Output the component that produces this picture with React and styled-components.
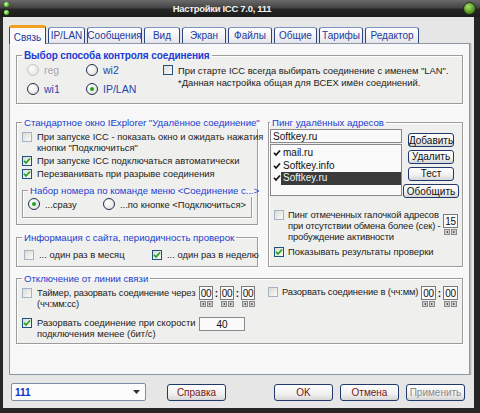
import styled, { createGlobalStyle } from 'styled-components';

const GlobalStyle = createGlobalStyle`
  html, body { margin: 0; padding: 0; background: #262626; }
  body {
    font-family: "Liberation Sans", Arial, sans-serif;
    font-size: 9.4px;
    color: #222;
  }
  * { box-sizing: border-box; }
`;

const Window = styled.div`
  width: 480px;
  height: 413px;
  display: flex;
  flex-direction: column;
  background: #262626;
  overflow: hidden;
`;

const TitleBar = styled.div`
  height: 17px;
  flex: none;
  display: flex;
  align-items: center;
  padding: 0 4px;
  background: linear-gradient(#6a6a6a, #444 45%, #262626 55%, #1c1c1c);
`;

const Leds = styled.div`
  display: flex;
  flex-direction: column;
  gap: 3px;
`;

const Led = styled.span`
  width: 5px;
  height: 5px;
  border-radius: 50%;
  background: radial-gradient(circle at 35% 35%, #d8ffb0, #5cc22c 60%, #2c6a14);
`;

const Title = styled.div`
  flex: 1;
  text-align: center;
  padding-right: 28px;
  color: #f2f2f2;
  font-weight: bold;
  font-size: 9.5px;
  letter-spacing: -0.3px;
`;

const Orb = styled.span`
  width: 13px;
  height: 13px;
  border-radius: 50%;
  border: 1px solid #1e3010;
  background: radial-gradient(circle at 40% 35%, #a8e070, #5a9a24 55%, #33600f);
`;

const Frame = styled.div`
  flex: 1;
  margin: 0 6px 5px 3px;
  padding: 8px 4px 0 6px;
  display: flex;
  flex-direction: column;
  background: #e6e6e6;
`;

const TabRow = styled.div`
  height: 18px;
  display: flex;
  align-items: flex-end;
  gap: 2px;
`;

const Tab = styled.div`
  width: ${p => p.$w}px;
  height: ${p => (p.$active ? 19 : 16)}px;
  margin-bottom: ${p => (p.$active ? -1 : 0)}px;
  position: relative;
  z-index: ${p => (p.$active ? 2 : 0)};
  display: flex;
  align-items: center;
  justify-content: center;
  padding-top: ${p => (p.$active ? 2 : 0)}px;
  border: 1px solid #2a4684;
  border-top: ${p => (p.$active ? '3px solid #f0a020' : '1px solid #7c94c0')};
  border-bottom: none;
  border-radius: 3px 3px 0 0;
  background: ${p => (p.$active ? '#fafafa' : 'linear-gradient(#ffffff, #f0f0f2 70%, #e2e4ea)')};
  color: #1d3a9e;
  font-size: 10px;
  white-space: nowrap;
`;

const Panel = styled.div`
  height: 332px;
  flex: none;
  padding: 5px 6px 0 6px;
  border: 1px solid #8c96a8;
  box-shadow: 1px 0 0 #b8b8b8, 2px 0 0 #d4d4d4;
  background: repeating-conic-gradient(#f3f3f3 0 25%, #fcfcfc 0 50%) 0 0 / 2px 2px;
`;

const Group = styled.fieldset`
  margin: 0;
  min-width: 0;
  padding: 0 ${p => p.$pr ?? 5}px ${p => p.$pb ?? 6}px ${p => p.$pl ?? 5}px;
  border: 1px solid #9c9c9c;
  box-shadow: inset 1px 1px 0 #fff, 1px 1px 0 #fff;
  background: #efefed;
  display: flex;
  flex-direction: column;
`;

const Legend = styled.legend`
  padding: 0 2px;
  line-height: 13px;
  color: #1a3cd0;
  font-size: ${p => (p.$bold ? 10 : 9.6)}px;
  font-weight: ${p => (p.$bold ? 'bold' : 'normal')};
  letter-spacing: ${p => (p.$bold ? '-0.1px' : '0')};
  white-space: nowrap;
`;

const BoxMark = styled.span`
  flex: none;
  width: 10px;
  height: 10px;
  margin-top: ${p => p.$mt ?? 1}px;
  border: 1px solid ${p => (p.$faint ? '#a2b2c8' : '#1c5180')};
  background: linear-gradient(135deg, #dcdcd4, #fafaf8);
  display: flex;
  align-items: center;
  justify-content: center;
`;

const CheckLabel = styled.span`
  line-height: 11px;
  white-space: nowrap;
  letter-spacing: ${p => (p.$tight ? '-0.15px' : '0')};
`;

const CheckRow = styled.div`
  display: flex;
  align-items: flex-start;
  gap: ${p => p.$gap ?? 5}px;
  width: ${p => (p.$w ? `${p.$w}px` : 'auto')};
  flex: ${p => (p.$grow ? 1 : 'none')};
`;

const Tick = ({ color = '#21a121' }) => (
  <svg width="8" height="8" viewBox="0 0 8 8">
    <path d="M1 3.8 L3 6 L7 1.5" stroke={color} strokeWidth="1.7" fill="none" />
  </svg>
);

const Checkbox = ({ checked, faint, children, mt, gap, w, grow, tight }) => (
  <CheckRow $gap={gap} $w={w} $grow={grow}>
    <BoxMark $faint={faint} $mt={mt}>{checked && <Tick />}</BoxMark>
    <CheckLabel $tight={tight}>{children}</CheckLabel>
  </CheckRow>
);

const RadioDot = styled.span`
  flex: none;
  width: 12px;
  height: 12px;
  border-radius: 50%;
  border: 1px solid ${p => (p.$disabled ? '#c6c6c2' : '#1e2f4a')};
  background: radial-gradient(circle at 35% 35%, #fff, #dddcd6);
  display: flex;
  align-items: center;
  justify-content: center;
  &::after {
    content: '';
    display: ${p => (p.$on ? 'block' : 'none')};
    width: 4px;
    height: 4px;
    border-radius: 50%;
    background: #22a022;
  }
`;

const RadioRow = styled.div`
  display: flex;
  align-items: center;
  gap: 5px;
  height: 16px;
  white-space: nowrap;
  color: ${p => (p.$disabled ? '#a8a8a8' : p.$blue ? '#2446b0' : '#222')};
  font-size: ${p => (p.$blue ? 10.5 : 9.4)}px;
`;

const Radio = ({ on, disabled, blue, children }) => (
  <RadioRow $disabled={disabled} $blue={blue}>
    <RadioDot $on={on} $disabled={disabled} />
    {children}
  </RadioRow>
);

const ModeBody = styled.div`
  display: flex;
  align-items: flex-start;
`;

const RadioGrid = styled.div`
  display: grid;
  grid-template-columns: 59px 59px;
  row-gap: 3px;
  margin-left: 5px;
`;

const NoteBlock = styled.div`
  margin-left: 18px;
  margin-top: 3px;
  & span { line-height: 12px; }
`;

const MidRow = styled.div`
  display: grid;
  grid-template-columns: 242px 195px;
  column-gap: 10px;
  margin-top: 12px;
`;

const LeftCol = styled.div`
  display: flex;
  flex-direction: column;
  gap: 6px;
`;

const Stack = styled.div`
  display: flex;
  flex-direction: column;
  gap: ${p => p.$gap ?? 1}px;
  margin-top: ${p => p.$mt ?? 0}px;
`;

const DialRadios = styled.div`
  display: flex;
  height: 14px;
  align-items: center;
  & > *:first-child { width: 84px; }
`;

const TwoCols = styled.div`
  display: grid;
  grid-template-columns: 128px 1fr;
  margin-top: 5px;
  margin-left: 2px;
`;

const PingTop = styled.div`
  display: flex;
  align-items: flex-start;
`;

const PingList = styled.div`
  width: 133px;
  display: flex;
  flex-direction: column;
  gap: 1px;
`;

const TextField = styled.div`
  height: ${p => p.$h || 14}px;
  width: ${p => (p.$w ? `${p.$w}px` : 'auto')};
  flex: none;
  border: 1px solid #8a8a8a;
  background: #fafafa;
  display: flex;
  align-items: center;
  justify-content: ${p => (p.$center ? 'center' : 'flex-start')};
  padding: 0 2px;
  font-size: 10px;
  color: #111;
`;

const ListBox = styled.div`
  height: 52px;
  border: 1px solid #8a8a8a;
  background: #fafafa;
  padding-top: 2px;
`;

const ListItem = styled.div`
  display: flex;
  align-items: center;
  height: 12.5px;
  padding-left: 2px;
  font-size: 10px;
`;

const ItemText = styled.span`
  flex: 1;
  padding-left: 2px;
  line-height: 12.5px;
  background: ${p => (p.$sel ? '#3b3b3b' : 'transparent')};
  color: ${p => (p.$sel ? '#f0f0f0' : '#111')};
`;

const ButtonCol = styled.div`
  width: 56px;
  margin-left: 1px;
  margin-top: 4px;
  display: flex;
  flex-direction: column;
  align-items: center;
  gap: 2.5px;
`;

const Button = styled.button`
  font: inherit;
  font-size: 10px;
  width: ${p => p.$w}px;
  height: ${p => p.$h || 14}px;
  flex: none;
  padding: 0;
  margin-left: ${p => p.$ml ?? 0}px;
  margin-top: ${p => p.$mt ?? 0}px;
  border: 1px solid #20386c;
  border-radius: 3px;
  background: linear-gradient(#ffffff, #f0f0f0 60%, #d6d6d6);
  color: ${p => p.$color || '#111'};
  display: flex;
  align-items: center;
  justify-content: center;
  white-space: nowrap;
`;

const PingOptions = styled.div`
  display: flex;
  flex-direction: column;
  gap: 4px;
  margin-top: 11px;
  margin-left: 4px;
`;

const PingCheck = styled.div`
  display: flex;
  align-items: flex-start;
`;

const SpinWrap = styled.div`
  display: flex;
  flex-direction: column;
  align-items: center;
  gap: 1px;
  flex: none;
  margin-top: ${p => p.$mt ?? 0}px;
  margin-right: ${p => p.$mr ?? 0}px;
`;

const SpinBox = styled.div`
  width: ${p => p.$w || 14}px;
  height: 14px;
  border: 1px solid #7a7a7a;
  background: #fafafa;
  display: flex;
  align-items: center;
  justify-content: center;
  font-size: 10px;
  letter-spacing: -0.3px;
  color: #111;
`;

const Arrows = styled.div`
  display: flex;
  gap: 1px;
`;

const ArrowBtn = styled.span`
  width: 6px;
  height: 6px;
  background: #cfcfcf;
  border: 1px solid #8a8a8a;
  display: flex;
  align-items: center;
  justify-content: center;
  &::after {
    content: '';
    border-top: 1.5px solid transparent;
    border-bottom: 1.5px solid transparent;
    ${p => (p.$left ? 'border-right: 2px solid #333;' : 'border-left: 2px solid #333;')}
  }
`;

const Spin = ({ value, w, mt, mr }) => (
  <SpinWrap $mt={mt} $mr={mr}>
    <SpinBox $w={w}>{value}</SpinBox>
    <Arrows>
      <ArrowBtn $left />
      <ArrowBtn />
    </Arrows>
  </SpinWrap>
);

const Colon = styled.span`
  width: 7px;
  height: 14px;
  display: flex;
  align-items: center;
  justify-content: center;
  font-weight: bold;
  font-size: 10px;
`;

const TimeGroup = styled.div`
  display: flex;
  align-items: flex-start;
  flex: none;
`;

const DisconnectRow = styled.div`
  display: flex;
  align-items: flex-start;
  margin-top: ${p => p.$mt ?? 0}px;
`;

const AtTime = styled.div`
  flex: 1;
  display: flex;
  align-items: flex-start;
  margin-left: 13px;
`;

const TimerText = styled.span`
  display: block;
  padding-top: 1px;
`;

const BottomBar = styled.div`
  display: flex;
  align-items: center;
  margin-top: 8px;
  height: 18px;
  padding: 0 5px 0 2px;
`;

const Combo = styled.div`
  width: 135px;
  height: 18px;
  border: 1px solid #7f8ea8;
  border-radius: 2px;
  background: #fcfcfc;
  display: flex;
  align-items: center;
  justify-content: space-between;
  padding: 0 5px 0 3px;
  color: #1230d0;
  font-weight: bold;
  font-size: 10px;
`;

const Spacer = styled.div`
  flex: 1;
`;

const App = () => {
  const tabs = [
    ['Связь', 37], ['IP/LAN', 37], ['Сообщения', 55], ['Вид', 36], ['Экран', 44],
    ['Файлы', 44], ['Общие', 43], ['Тарифы', 44], ['Редактор', 54],
  ];

  return (
    <Window>
      <GlobalStyle />
      <TitleBar>
        <Leds>
          <Led />
          <Led />
        </Leds>
        <Title>Настройки ICC 7.0, 111</Title>
        <Orb />
      </TitleBar>
      <Frame>
        <TabRow>
          {tabs.map(([name, w], i) => (
            <Tab key={name} $w={w} $active={i === 0}>{name}</Tab>
          ))}
        </TabRow>
        <Panel>
          <Group $pb={6}>
            <Legend $bold>Выбор способа контроля соединения</Legend>
            <ModeBody>
              <RadioGrid>
                <Radio disabled blue>reg</Radio>
                <Radio blue>wi2</Radio>
                <Radio blue>wi1</Radio>
                <Radio blue on>IP/LAN</Radio>
              </RadioGrid>
              <NoteBlock>
                <Checkbox mt={0}>
                  При старте ICC всегда выбирать соединение с именем "LAN".
                  <br />
                  *Данная настройка общая для ВСЕХ имён соединений.
                </Checkbox>
              </NoteBlock>
            </ModeBody>
          </Group>

          <MidRow>
            <LeftCol>
              <Group>
                <Legend>Стандартное окно IExplorer "Удалённое соединение"</Legend>
                <Stack $mt={2} $gap={2}>
                  <Checkbox faint>
                    При запуске ICC - показать окно и ожидать нажатия
                    <br />
                    кнопки "Подключиться"
                  </Checkbox>
                  <Checkbox checked>При запуске ICC подключаться автоматически</Checkbox>
                  <Checkbox checked>Перезванивать при разрыве соединения</Checkbox>
                </Stack>
                <Stack $mt={5}>
                  <Group>
                    <Legend>Набор номера по команде меню &lt;Соединение с...&gt;</Legend>
                    <DialRadios>
                      <Radio on>...сразу</Radio>
                      <Radio>...по кнопке &lt;Подключиться&gt;</Radio>
                    </DialRadios>
                  </Group>
                </Stack>
              </Group>
              <Group $pb={6}>
                <Legend>Информация с сайта, периодичность проверок</Legend>
                <TwoCols>
                  <Checkbox faint>... один раз в месяц</Checkbox>
                  <Checkbox checked>... один раз в неделю</Checkbox>
                </TwoCols>
              </Group>
            </LeftCol>

            <Group $pl={1} $pr={3}>
              <Legend>Пинг удалённых адресов</Legend>
              <PingTop>
                <PingList>
                  <TextField>Softkey.ru</TextField>
                  <ListBox>
                    <ListItem><Tick color="#111" /><ItemText>mail.ru</ItemText></ListItem>
                    <ListItem><Tick color="#111" /><ItemText>Softkey.info</ItemText></ListItem>
                    <ListItem><Tick color="#111" /><ItemText $sel>Softkey.ru</ItemText></ListItem>
                  </ListBox>
                </PingList>
                <ButtonCol>
                  <Button $w={46}>Добавить</Button>
                  <Button $w={46}>Удалить</Button>
                  <Button $w={46} $mt={0.5}>Тест</Button>
                  <Button $w={56} $mt={1}>Обобщить</Button>
                </ButtonCol>
              </PingTop>
              <PingOptions>
                <PingCheck>
                  <Checkbox faint grow gap={4} tight>
                    Пинг отмеченных галочкой адресов
                    <br />
                    при отсутствии обмена более (сек) -
                    <br />
                    пробуждение активности
                  </Checkbox>
                  <Spin value="15" w={15} mt={5} mr={1} />
                </PingCheck>
                <Checkbox checked gap={4}>Показывать результаты проверки</Checkbox>
              </PingOptions>
            </Group>
          </MidRow>

          <Stack $mt={5}>
            <Group $pr={4} $pb={4}>
              <Legend>Отключение от линии связи</Legend>
              <DisconnectRow $mt={1}>
                <Checkbox faint w={177} mt={2} tight>
                  <TimerText>
                    Таймер, разорвать соединение через
                    <br />
                    (чч:мм:сс)
                  </TimerText>
                </Checkbox>
                <TimeGroup>
                  <Spin value="00" />
                  <Colon>:</Colon>
                  <Spin value="00" />
                  <Colon>:</Colon>
                  <Spin value="00" />
                </TimeGroup>
                <AtTime>
                  <Checkbox faint grow mt={1} gap={4} tight>Разорвать соединение в (чч:мм)</Checkbox>
                  <TimeGroup>
                    <Spin value="00" w={15} />
                    <Colon>:</Colon>
                    <Spin value="00" w={15} />
                  </TimeGroup>
                </AtTime>
              </DisconnectRow>
              <DisconnectRow $mt={8}>
                <Checkbox checked w={177}>
                  Разорвать соединение при скорости
                  <br />
                  подключения менее (бит/с)
                </Checkbox>
                <TextField $w={46} $h={14} $center>40</TextField>
              </DisconnectRow>
            </Group>
          </Stack>
        </Panel>

        <BottomBar>
          <Combo>
            111
            <svg width="7" height="4" viewBox="0 0 7 4">
              <path d="M0 0 H7 L3.5 4 Z" fill="#333" />
            </svg>
          </Combo>
          <Button $w={59} $h={17} $color="#7a1414" $ml={21}>Справка</Button>
          <Spacer />
          <Button $w={59} $h={17} $color="#7a1414">OK</Button>
          <Button $w={59} $h={17} $color="#7a1414" $ml={7}>Отмена</Button>
          <Button $w={59} $h={17} $color="#8a8a8a" $ml={7}>Применить</Button>
        </BottomBar>
      </Frame>
    </Window>
  );
};

export default App;
